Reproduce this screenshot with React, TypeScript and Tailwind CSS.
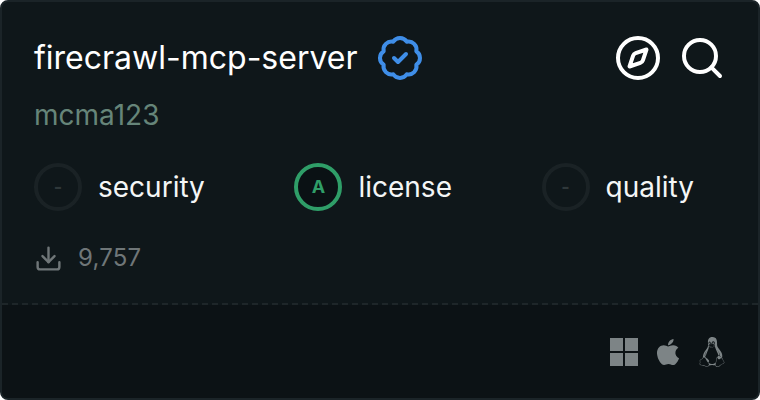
import { BadgeCheck, Compass, Download, Search } from "lucide-react";
import { FaApple, FaLinux } from "react-icons/fa";

function Grade({ grade, label, active }: { grade: string; label: string; active?: boolean }) {
  return (
    <div className="flex items-center gap-4">
      <div
        className={
          active
            ? "flex h-12 w-12 items-center justify-center rounded-full border-4 border-[#2f9e68] bg-[#0a1114] text-lg font-bold text-[#2f9e68]"
            : "flex h-12 w-12 items-center justify-center rounded-full border-4 border-[#1a2225] text-lg font-bold text-[#2f383a]"
        }
      >
        {grade}
      </div>
      <span className="text-[28px] leading-8 text-[#f4f6f6]">{label}</span>
    </div>
  );
}

export default function App() {
  return (
    <div className="h-[400px] w-[760px] bg-white font-['Inter',sans-serif]">
      <div className="flex h-full flex-col overflow-hidden rounded-lg border-2 border-[#1b2428] bg-[#0f171a]">
        <div className="flex flex-1 flex-col border-b-2 border-dashed border-[#1e2629] px-8 pt-8">
          <div className="flex items-center justify-between">
            <div className="flex items-center gap-[18px]">
              <span className="text-[32px] leading-11 text-white">firecrawl-mcp-server</span>
              <BadgeCheck size={48} strokeWidth={2} className="text-[#3f8ee8]" />
            </div>
            <div className="flex items-center gap-4">
              <Compass size={48} strokeWidth={2} className="text-white" />
              <Search size={48} strokeWidth={2} className="text-white" />
            </div>
          </div>
          <div className="mt-[17px] text-[28px] leading-8 text-[#668579]">mcma123</div>
          <div className="mt-8 flex items-center justify-between pr-8">
            <Grade grade="-" label="security" />
            <Grade grade="A" label="license" active />
            <Grade grade="-" label="quality" />
          </div>
          <div className="mt-[31px] flex items-center gap-[15px] text-[#6f7678]">
            <Download size={29} strokeWidth={2} />
            <span className="text-2xl leading-8 tracking-[0.2px]">9,757</span>
          </div>
        </div>
        <div className="flex h-[93px] items-center justify-end gap-[14px] bg-[#0c1215] pr-[31px] text-[#7d8486]">
          <svg width="28" height="28" viewBox="0 0 28 28" fill="currentColor" className="mr-[1px]">
            <rect x="0" y="0" width="13" height="13" />
            <rect x="15" y="0" width="13" height="13" />
            <rect x="0" y="15" width="13" height="13" />
            <rect x="15" y="15" width="13" height="13" />
          </svg>
          <FaApple size={30} />
          <FaLinux size={30} />
        </div>
      </div>
    </div>
  );
}
